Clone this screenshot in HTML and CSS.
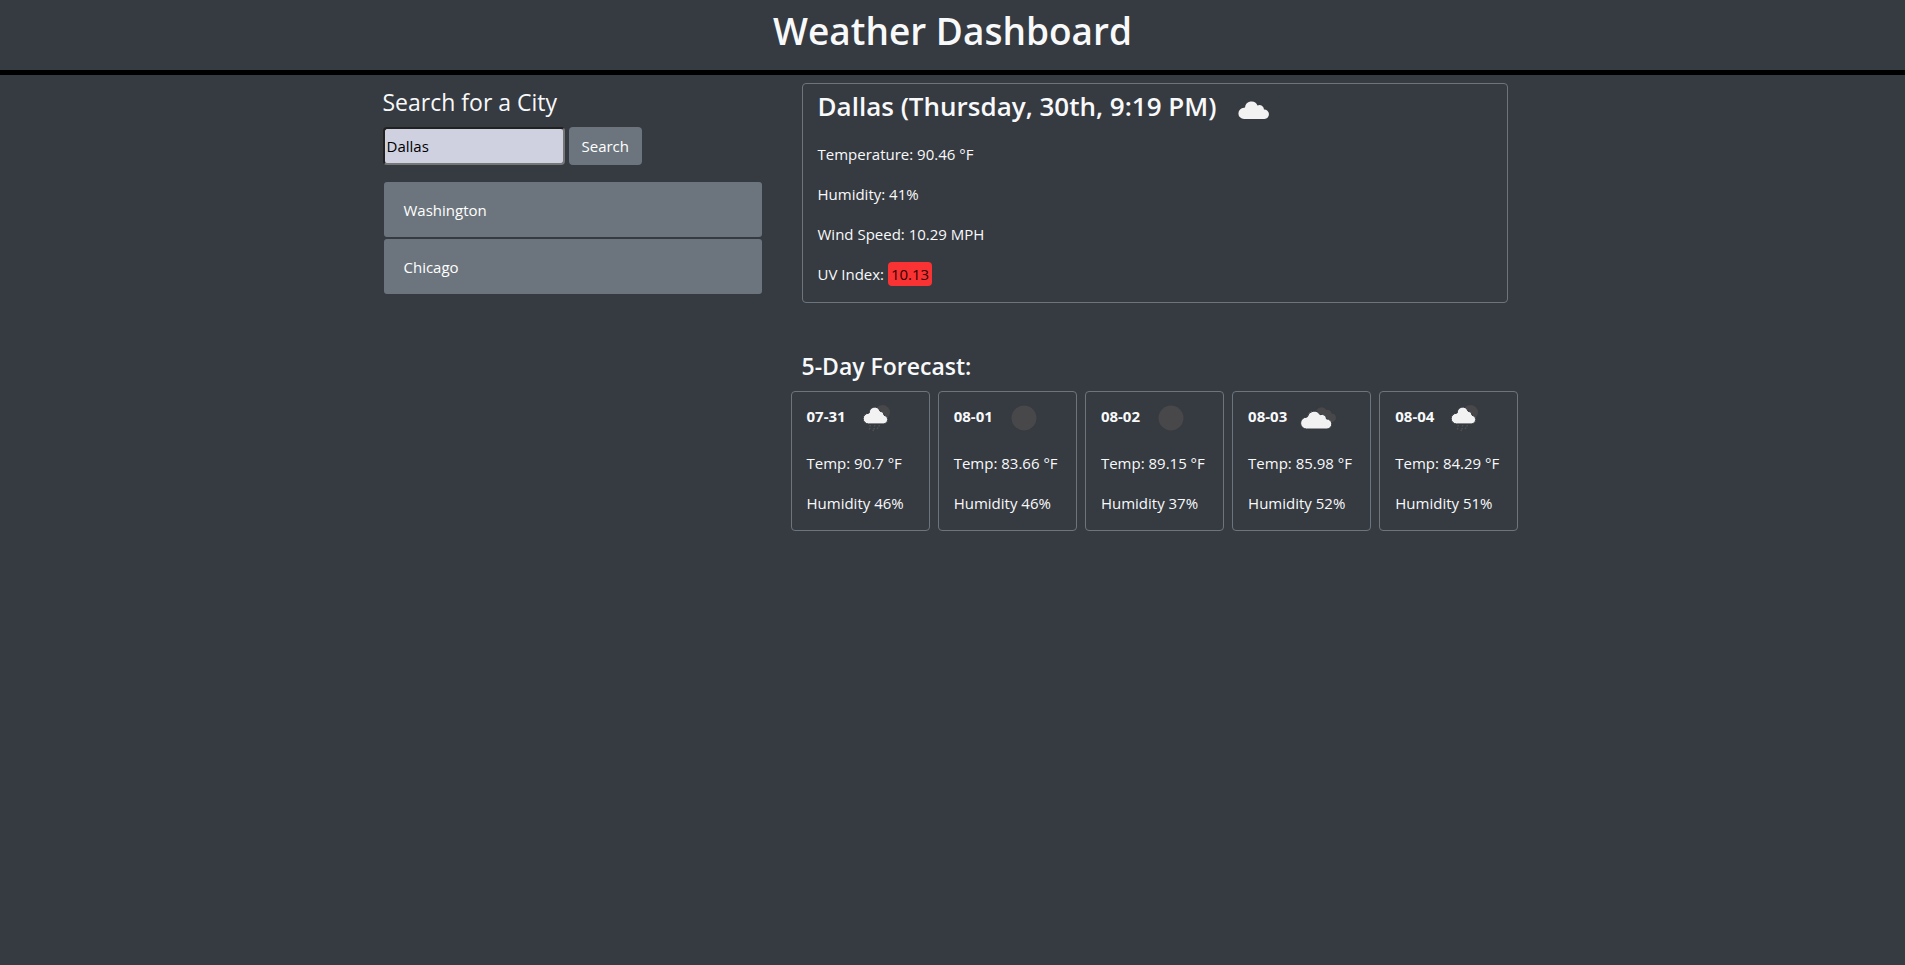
FILE: index.html
```html
<!DOCTYPE html>
<html lang="en">
<head>
<meta charset="utf-8">
<meta name="viewport" content="width=device-width, initial-scale=1">
<title>Weather Dashboard</title>
<link rel="stylesheet" href="styles.css">
</head>
<body>
<svg class="sprite" aria-hidden="true">
  <symbol id="cloud" viewBox="0 0 50 50">
    <path fill="#f2f2f2" d="M15 34a5.500 5.500 0 0 1 0-11.200L16 22.500A6.500 6.500 0 0 1 28.500 20.500A4.500 4.500 0 0 1 35 24.600A4.700 4.700 0 0 1 35.500 34Z"/>
  </symbol>
  <symbol id="moon" viewBox="0 0 50 50">
    <circle fill="#48484a" cx="25" cy="25" r="12.500"/>
  </symbol>
  <symbol id="broken" viewBox="0 0 50 50">
    <path fill="#48484a" d="M23 18A6 6 0 0 1 33.500 17A4 4 0 0 1 38.500 20.500A4.200 4.200 0 0 1 39 29H34Z"/>
    <path fill="#f2f2f2" stroke="#363a41" stroke-width="1" d="M13.500 36a5.900 5.900 0 0 1 0-11.800L14.500 23.700A6.700 6.700 0 0 1 27 21.700A4.700 4.700 0 0 1 33.500 26A5 5 0 0 1 34 36Z"/>
  </symbol>
  <symbol id="rain" viewBox="0 0 50 50">
    <circle fill="#48484a" cx="30.500" cy="19.500" r="7.500"/>
    <path fill="#f2f2f2" stroke="#363a41" stroke-width="1" d="M16.500 30.900a5.300 5.300 0 0 1 0-10.600L17.200 20A5.500 5.500 0 0 1 28 18.200A4 4 0 0 1 32 22.200A4.400 4.400 0 0 1 32 30.900Z"/>
    <path stroke="#505052" stroke-width="1.500" d="M18.500 32l-.8 1.500M23 32l-.8 1.500M27.500 32l-.8 1.500M18 35l-.8 1.500M22.500 35l-.8 1.500M26 34.500l-.8 1.500M21.500 37l-.8 1"/>
  </symbol>
</svg>
<header class="header">
  <h1 class="header-title">Weather Dashboard</h1>
</header>
<main class="container">
  <aside class="sidebar">
    <form class="search">
      <label class="search-label" for="city">Search for a City</label>
      <div class="search-row">
        <input class="search-input" id="city" type="text" value="Dallas">
        <button class="search-button" type="button">Search</button>
      </div>
    </form>
    <div class="history">
      <button class="history-item" type="button">Washington</button>
      <button class="history-item" type="button">Chicago</button>
    </div>
  </aside>
  <div class="content">
    <section class="card current">
      <h2 class="current-title">Dallas (Thursday, 30th, 9:19 PM) <svg class="icon"><use href="#cloud"/></svg></h2>
      <p class="line">Temperature: 90.46 °F</p>
      <p class="line">Humidity: 41%</p>
      <p class="line">Wind Speed: 10.29 MPH</p>
      <p class="line">UV Index: <span class="uv">10.13</span></p>
    </section>
    <section class="forecast">
      <h3 class="forecast-title">5-Day Forecast:</h3>
      <div class="days">
        <article class="card day">
          <h4 class="day-title">07-31 <svg class="icon"><use href="#rain"/></svg></h4>
          <p class="line">Temp: 90.7 °F</p>
          <p class="line">Humidity 46%</p>
        </article>
        <article class="card day">
          <h4 class="day-title">08-01 <svg class="icon"><use href="#moon"/></svg></h4>
          <p class="line">Temp: 83.66 °F</p>
          <p class="line">Humidity 46%</p>
        </article>
        <article class="card day">
          <h4 class="day-title">08-02 <svg class="icon"><use href="#moon"/></svg></h4>
          <p class="line">Temp: 89.15 °F</p>
          <p class="line">Humidity 37%</p>
        </article>
        <article class="card day">
          <h4 class="day-title">08-03 <svg class="icon"><use href="#broken"/></svg></h4>
          <p class="line">Temp: 85.98 °F</p>
          <p class="line">Humidity 52%</p>
        </article>
        <article class="card day">
          <h4 class="day-title">08-04 <svg class="icon"><use href="#rain"/></svg></h4>
          <p class="line">Temp: 84.29 °F</p>
          <p class="line">Humidity 51%</p>
        </article>
      </div>
    </section>
  </div>
</main>
</body>
</html>
```
FILE: styles.css
```css
* {
  box-sizing: border-box;
}

body {
  margin: 0;
  min-height: 100vh;
  background: #363a41;
  color: #f8f9fa;
  font-family: "Segoe UI", "Open Sans", "Noto Sans", sans-serif;
  font-size: 15px;
  line-height: 24px;
}

h1, h2, h3, h4, p {
  margin: 0;
}

button, input {
  font: inherit;
}

.sprite {
  display: none;
}

.header {
  padding: 7px 16px 15px;
  border-bottom: 5px solid #000;
  text-align: center;
}

.header-title {
  font-size: 37px;
  font-weight: 600;
  line-height: 48px;
}

.container {
  display: grid;
  grid-template-columns: 1fr 2fr;
  max-width: 1140px;
  margin: 0 auto;
  padding-top: 8px;
}

.sidebar {
  padding-top: 4px;
}

.search-label {
  display: block;
  margin-bottom: 10px;
  font-size: 23px;
  line-height: 30px;
}

.search-row {
  display: flex;
  gap: 4px;
}

.search-input {
  width: 182px;
  height: 38px;
  padding: 1px 2px;
  border: 2px inset #767676;
  border-radius: 4px;
  background: #cfd0e0;
  color: #000;
}

.search-button {
  height: 38px;
  padding: 0 13px;
  border: 0;
  border-radius: 4px;
  background: #6c757d;
  color: #fff;
}

.history {
  display: flex;
  flex-direction: column;
  gap: 2px;
  margin-top: 17px;
  padding: 0 1px;
}

.history-item {
  height: 55px;
  padding: 0 20px;
  border: 0;
  border-radius: 3px;
  background: #6c757d;
  color: #fff;
  text-align: left;
}

.card {
  border: 1px solid #6c757d;
  border-radius: 4px;
}

.current {
  margin: 0 15px 0 39px;
  padding: 3px 15px 16px;
}

.icon {
  flex: none;
  width: 50px;
  height: 50px;
}

.current-title {
  display: flex;
  align-items: center;
  height: 38px;
  margin-bottom: 17px;
  font-size: 26px;
  font-weight: 600;
  line-height: 38px;
}

.current-title .icon {
  margin: 7px 0 0 12px;
}

.line + .line {
  margin-top: 16px;
}

.uv {
  display: inline-block;
  padding: 0 3px;
  border-radius: 4px;
  background: #f93333;
  color: #300;
}

.forecast {
  padding: 48px 4px 0 28px;
}

.forecast-title {
  margin: 0 0 10px 11px;
  font-size: 23px;
  font-weight: 600;
  line-height: 30px;
}

.days {
  display: grid;
  grid-template-columns: repeat(5, 1fr);
  gap: 8px;
}

.day {
  padding: 0 0 15px 15px;
  white-space: nowrap;
}

.day-title {
  display: flex;
  align-items: center;
  height: 48px;
  margin-bottom: 11px;
  font-size: 15px;
  font-weight: 700;
}

.day-title .icon {
  margin: 4px 0 0 6px;
}
```
